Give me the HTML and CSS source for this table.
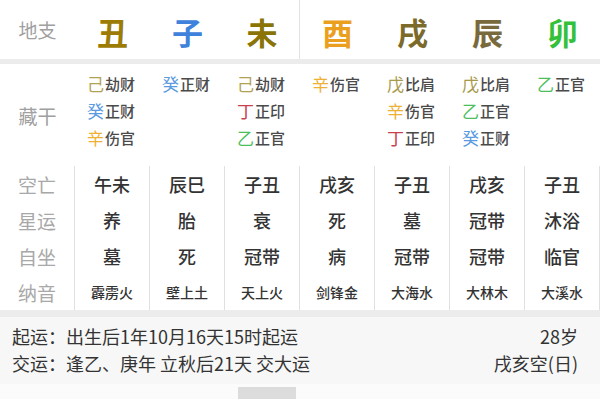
FILE: index.html
```html
<!DOCTYPE html>
<html lang="zh">
<head>
<meta charset="utf-8">
<link rel="stylesheet" href="styles.css">
</head>
<body>
<div class="chart">
  <div class="row branches">
    <div class="label">地支</div>
    <div class="cell"><span class="c-chou">丑</span></div>
    <div class="cell"><span class="c-zi">子</span></div>
    <div class="cell split"><span class="c-wei">未</span></div>
    <div class="cell"><span class="c-you">酉</span></div>
    <div class="cell"><span class="c-xu">戌</span></div>
    <div class="cell"><span class="c-chen">辰</span></div>
    <div class="cell"><span class="c-mao">卯</span></div>
  </div>
  <div class="sep"></div>
  <div class="row hidden">
    <div class="label">藏干</div>
    <div class="cell">
      <div class="hs"><span class="stem s-ji">己</span><span class="god">劫财</span></div>
      <div class="hs"><span class="stem s-gui">癸</span><span class="god">正财</span></div>
      <div class="hs"><span class="stem s-xin">辛</span><span class="god">伤官</span></div>
    </div>
    <div class="cell">
      <div class="hs"><span class="stem s-gui">癸</span><span class="god">正财</span></div>
    </div>
    <div class="cell">
      <div class="hs"><span class="stem s-ji">己</span><span class="god">劫财</span></div>
      <div class="hs"><span class="stem s-ding">丁</span><span class="god">正印</span></div>
      <div class="hs"><span class="stem s-yi">乙</span><span class="god">正官</span></div>
    </div>
    <div class="cell">
      <div class="hs"><span class="stem s-xin">辛</span><span class="god">伤官</span></div>
    </div>
    <div class="cell">
      <div class="hs"><span class="stem s-wu">戊</span><span class="god">比肩</span></div>
      <div class="hs"><span class="stem s-xin">辛</span><span class="god">伤官</span></div>
      <div class="hs"><span class="stem s-ding">丁</span><span class="god">正印</span></div>
    </div>
    <div class="cell">
      <div class="hs"><span class="stem s-wu">戊</span><span class="god">比肩</span></div>
      <div class="hs"><span class="stem s-yi">乙</span><span class="god">正官</span></div>
      <div class="hs"><span class="stem s-gui">癸</span><span class="god">正财</span></div>
    </div>
    <div class="cell">
      <div class="hs"><span class="stem s-yi">乙</span><span class="god">正官</span></div>
    </div>
  </div>
  <div class="table">
    <div class="t-label">空亡</div>
    <div class="t-cell">午未</div><div class="t-cell">辰巳</div><div class="t-cell">子丑</div><div class="t-cell">戌亥</div><div class="t-cell">子丑</div><div class="t-cell">戌亥</div><div class="t-cell">子丑</div>
    <div class="t-label">星运</div>
    <div class="t-cell">养</div><div class="t-cell">胎</div><div class="t-cell">衰</div><div class="t-cell">死</div><div class="t-cell">墓</div><div class="t-cell">冠带</div><div class="t-cell">沐浴</div>
    <div class="t-label">自坐</div>
    <div class="t-cell">墓</div><div class="t-cell">死</div><div class="t-cell">冠带</div><div class="t-cell">病</div><div class="t-cell">冠带</div><div class="t-cell">冠带</div><div class="t-cell">临官</div>
    <div class="t-label">纳音</div>
    <div class="t-cell small">霹雳火</div><div class="t-cell small">壁上土</div><div class="t-cell small">天上火</div><div class="t-cell small">剑锋金</div><div class="t-cell small">大海水</div><div class="t-cell small">大林木</div><div class="t-cell small">大溪水</div>
  </div>
  <div class="sep2"></div>
  <div class="info">
    <div class="info-row"><span>起运：出生后1年10月16天15时起运</span><span>28岁</span></div>
    <div class="info-row"><span>交运：逢乙、庚年 立秋后21天 交大运</span><span>戌亥空(日)</span></div>
  </div>
  <div class="tabs">
    <span class="tab"></span>
  </div>
</div>
</body>
</html>
```

FILE: styles.css
```css
* { box-sizing: border-box; margin: 0; padding: 0; }
html, body { width: 600px; height: 400px; overflow: hidden; background: #fff; }
body {
  font-family: "Noto Sans CJK SC", "Noto Sans", sans-serif;
  color: #333;
}
.chart { width: 600px; }

.row {
  display: grid;
  grid-template-columns: repeat(8, 75px);
}
.label {
  color: #a0a0a0;
  font-size: 19px;
  text-align: center;
  align-self: center;
}

.branches { height: 59px; }
.branches .cell {
  display: flex;
  align-items: center;
  justify-content: center;
  font-size: 31px;
  font-weight: 700;
  padding-top: 4px;
}
.branches .split { border-right: 1px solid #e2e2e2; }
.c-chou { color: #9c7c05; }
.c-zi { color: #3f82dc; }
.c-wei { color: #8a7406; }
.c-you { color: #eb9f1e; }
.c-xu { color: #7c6a2a; }
.c-chen { color: #796a3e; }
.c-mao { color: #34c03a; }

.sep { height: 5px; background: #ececec; }

.hidden { height: 102px; padding-top: 6px; }
.hidden .label { margin-top: -6px; }
.hidden .cell { padding-left: 12px; }
.hs { height: 27px; display: flex; align-items: center; }
.stem { font-size: 17px; }
.god { font-size: 15px; color: #4a4a4a; margin-left: 1px; font-weight: 500; }
.s-ji { color: #b2a256; }
.s-gui { color: #5a9ae0; }
.s-xin { color: #eeb136; }
.s-ding { color: #c8414f; }
.s-yi { color: #4cbf5c; }
.s-wu { color: #a89a4a; }

.table {
  display: grid;
  grid-template-columns: repeat(8, 75px);
  grid-auto-rows: 36px;
}
.t-label, .t-cell {
  border-right: 1px solid #e0e0e0;
  display: flex;
  align-items: center;
  justify-content: center;
}
.t-label { color: #a8a8a8; font-size: 19px; }
.t-cell { font-size: 18px; color: #333; font-weight: 500; }
.t-cell.small { font-size: 14px; }

.sep2 { height: 7px; background: #ececec; }

.info {
  height: 67px;
  background: #f7f7f7;
  padding: 6px 22px 0 12px;
}
.info-row {
  display: flex;
  justify-content: space-between;
  height: 27px;
  line-height: 27px;
  font-size: 18px;
  color: #333;
}

.tabs {
  height: 15px;
  background: #fbfbfb;
  display: flex;
  padding-left: 238px;
  padding-top: 3px;
}
.tab {
  width: 58px;
  height: 12px;
  background: #dcdcdc;
}
```
